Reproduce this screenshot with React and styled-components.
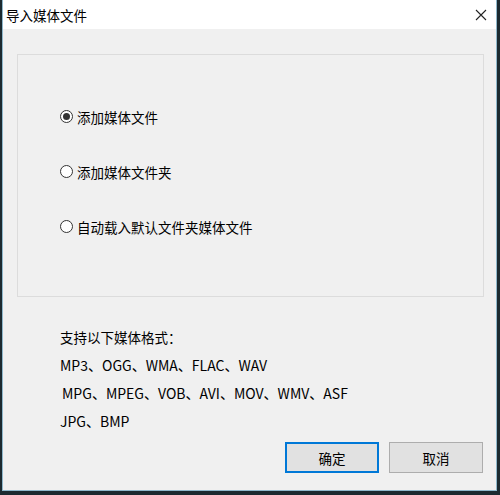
import React from "react";
import styled, { createGlobalStyle } from "styled-components";

const Global = createGlobalStyle`
  html, body { margin: 0; padding: 0; }
  body {
    width: 500px;
    height: 495px;
    background: #1c2a30;
    overflow: hidden;
    font-family: "Noto Sans CJK SC", "Microsoft YaHei", sans-serif;
  }
`;

const Screen = styled.div`
  width: 500px;
  height: 495px;
  padding: 0 3px 4px 2px;
  box-sizing: border-box;
  display: flex;
`;

const Window = styled.div`
  flex: 1;
  display: flex;
  flex-direction: column;
  background: #f0f0f0;
  border: 1px solid #8fb8cc;
  border-top: none;
  box-sizing: border-box;
`;

const TitleBar = styled.div`
  height: 29px;
  background: #ffffff;
  display: flex;
  align-items: center;
  justify-content: space-between;
  padding: 0 9px 0 3px;
  flex-shrink: 0;
`;

const Title = styled.span`
  font-size: 13.5px;
  color: #000;
`;

const Body = styled.div`
  flex: 1;
  display: flex;
  flex-direction: column;
  padding: 25px 12px 0 14px;
`;

const GroupBox = styled.div`
  height: 243px;
  box-sizing: border-box;
  border: 1px solid #dcdcdc;
  padding: 53px 0 0 42px;
  display: flex;
  flex-direction: column;
  gap: 38px;
`;

const RadioRow = styled.label`
  display: flex;
  align-items: center;
  height: 17px;
  gap: 4px;
  font-size: 13.5px;
  color: #000;
`;

const RadioCircle = styled.span`
  width: 13px;
  height: 13px;
  border: 1px solid #333;
  border-radius: 50%;
  box-sizing: border-box;
  background: #fff;
  display: flex;
  align-items: center;
  justify-content: center;
  &::after {
    content: "";
    width: 7px;
    height: 7px;
    border-radius: 50%;
    background: ${(p) => (p.$checked ? "#333" : "transparent")};
  }
`;

const Info = styled.div`
  margin-top: 26px;
  padding-left: 43px;
  display: flex;
  flex-direction: column;
`;

const InfoLine = styled.div`
  height: 28px;
  line-height: 28px;
  font-size: ${(p) => (p.$latin ? 14 : 13.5)}px;
  color: #000;
  padding-left: ${(p) => p.$indent || 0}px;
`;

const ButtonRow = styled.div`
  margin-top: 7px;
  display: flex;
  justify-content: flex-end;
  gap: 10px;
  padding-right: 1px;
`;

const Button = styled.button`
  width: 94px;
  height: 31px;
  box-sizing: border-box;
  font-family: inherit;
  font-size: 13.5px;
  color: #000;
  background: #e1e1e1;
  border: ${(p) => (p.$primary ? "2px solid #0078d7" : "1px solid #adadad")};
  padding: 0;
`;

const radios = [
  { label: "添加媒体文件", checked: true },
  { label: "添加媒体文件夹", checked: false },
  { label: "自动载入默认文件夹媒体文件", checked: false },
];

export default function App() {
  return (
    <>
      <Global />
      <Screen>
        <Window>
          <TitleBar>
            <Title>导入媒体文件</Title>
            <svg width="12" height="12" viewBox="0 0 12 12">
              <path d="M1 1 L11 11 M11 1 L1 11" stroke="#222" strokeWidth="1.1" />
            </svg>
          </TitleBar>
          <Body>
            <GroupBox>
              {radios.map((r) => (
                <RadioRow key={r.label}>
                  <RadioCircle $checked={r.checked} />
                  {r.label}
                </RadioRow>
              ))}
            </GroupBox>
            <Info>
              <InfoLine>支持以下媒体格式：</InfoLine>
              <InfoLine $latin>MP3、OGG、WMA、FLAC、WAV</InfoLine>
              <InfoLine $latin $indent={2}>MPG、MPEG、VOB、AVI、MOV、WMV、ASF</InfoLine>
              <InfoLine $latin>JPG、BMP</InfoLine>
            </Info>
            <ButtonRow>
              <Button $primary>确定</Button>
              <Button>取消</Button>
            </ButtonRow>
          </Body>
        </Window>
      </Screen>
    </>
  );
}
